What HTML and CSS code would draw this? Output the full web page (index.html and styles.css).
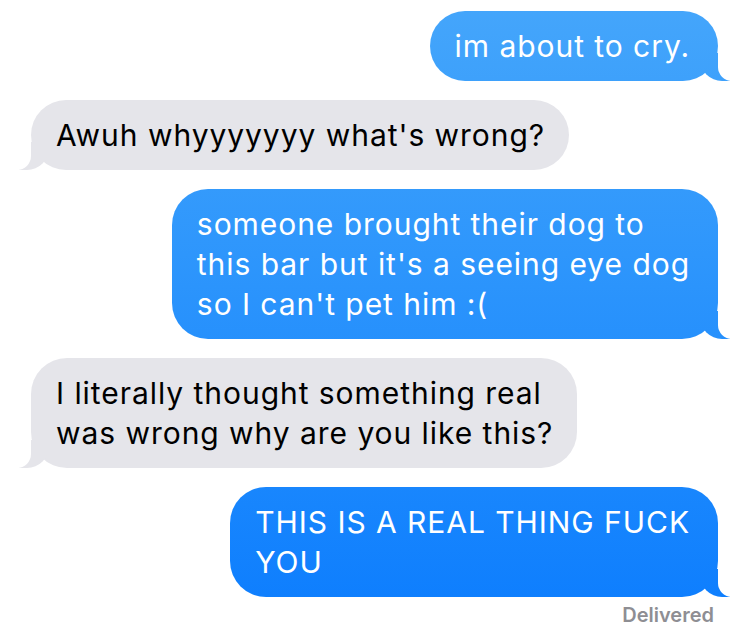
FILE: index.html
```html
<!DOCTYPE html>
<html lang="en">
<head>
    <meta charset="UTF-8">
    <meta name="viewport" content="width=device-width, initial-scale=1.0">
    <title>Messages</title>
    <link rel="stylesheet" href="styles.css">
</head>
<body>
    <div class="thread">
        <div class="bubble sent">im about to cry.</div>
        <div class="bubble received">Awuh whyyyyyyy what's wrong?</div>
        <div class="bubble sent">someone brought their dog to<br>this bar but it's a seeing eye dog<br>so I can't pet him :(</div>
        <div class="bubble received">I literally thought something real<br>was wrong why are you like this?</div>
        <div class="bubble sent">THIS IS A REAL THING FUCK<br>YOU</div>
        <div class="status">Delivered</div>
    </div>
</body>
</html>
```

FILE: styles.css
```css
/* iMessage thread */
body {
    margin: 0;
    padding: 0;
    background-color: #fff;
    font-family: 'Inter', 'Roboto', sans-serif;
    -webkit-font-smoothing: antialiased;
}
.thread {
    display: flex;
    flex-direction: column;
    gap: 19px;
    padding: 11px 32px 0 31px;
}
.bubble {
    position: relative;
    z-index: 0;
    font-size: 30px;
    letter-spacing: 0.95px;
    line-height: 40px;
    padding: 15px 28px 15px 25px;
    border-radius: 36px;
    max-width: 580px;
}
.bubble::before,
.bubble::after {
    content: "";
    position: absolute;
    z-index: -1;
    bottom: 0;
    height: 28px;
}
.sent {
    align-self: flex-end;
    color: #fff;
    background: linear-gradient(to bottom, #45a6fb 0%, #2b94fc 45%, #0b7cfe 100%) fixed;
}
.sent::before {
    right: -12px;
    width: 30px;
    background: inherit;
    background-attachment: fixed;
    border-bottom-left-radius: 22px;
}
.sent::after {
    right: -16px;
    width: 16px;
    background-color: #fff;
    border-bottom-left-radius: 14px;
}
.received {
    align-self: flex-start;
    color: #000;
    background-color: #e5e5ea;
    padding-right: 24px;
}
.received::before {
    left: -12px;
    width: 30px;
    background-color: #e5e5ea;
    border-bottom-right-radius: 22px;
}
.received::after {
    left: -16px;
    width: 16px;
    background-color: #fff;
    border-bottom-right-radius: 14px;
}
.status {
    align-self: flex-end;
    margin-top: -13px;
    margin-right: 4px;
    font-size: 20px;
    font-weight: 600;
    color: #8e8e93;
}
```
